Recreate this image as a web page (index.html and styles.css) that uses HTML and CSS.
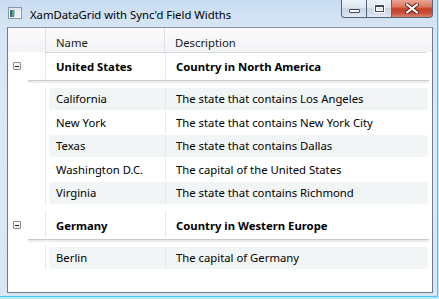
FILE: index.html
```html
<!DOCTYPE html>
<html>
<head>
<meta charset="utf-8">
<link rel="stylesheet" href="styles.css">
</head>
<body>
<div class="window">
  <div class="titlebar">
    <svg class="app-icon" width="14" height="12" viewBox="0 0 14 12">
      <rect x="0.5" y="0.5" width="13" height="11" fill="#f6f8fa" stroke="#8d97a3"/>
      <rect x="1" y="1" width="12" height="2" fill="#dde5ee"/>
      <rect x="2" y="3" width="2" height="7" fill="#2f6e9e"/>
      <rect x="4" y="3" width="2" height="7" fill="#5ea86b"/>
      <rect x="6" y="3" width="1" height="7" fill="#a9c8d8"/>
      <rect x="8" y="3" width="4" height="7" fill="#e8edf2"/>
    </svg>
    <span class="title">XamDataGrid with Sync'd Field Widths</span>
    <div class="caption">
      <div class="cbtn min"><span class="glyph-min"></span></div>
      <div class="cbtn max"><span class="glyph-max"></span></div>
      <div class="cbtn close">
        <svg width="16" height="11" viewBox="0 0 16 11">
          <path d="M3 1.5 L13 9.5 M13 1.5 L3 9.5" stroke="#5a2418" stroke-width="4" stroke-linecap="round" fill="none"/>
          <path d="M3 1.5 L13 9.5 M13 1.5 L3 9.5" stroke="#ffffff" stroke-width="2.2" stroke-linecap="round" fill="none"/>
        </svg>
      </div>
    </div>
  </div>
  <div class="client">
    <div class="hdr">
      <div class="sel"></div>
      <div class="hcell hname">Name</div>
      <div class="hcell hdesc">Description</div>
    </div>
    <div class="hdr-line"></div>

    <div class="group">
      <div class="grow">
        <div class="sel"><span class="expander"></span></div>
        <div class="gname">United States</div>
        <div class="gdesc">Country in North America</div>
      </div>
      <div class="gsep"><div class="gsep-line"></div></div>
      <div class="row alt"><div class="sel"></div><div class="rec"><div class="rname">California</div><div class="rdesc">The state that contains Los Angeles</div></div></div>
      <div class="row"><div class="sel"></div><div class="rec"><div class="rname">New York</div><div class="rdesc">The state that contains New York City</div></div></div>
      <div class="row alt"><div class="sel"></div><div class="rec"><div class="rname">Texas</div><div class="rdesc">The state that contains Dallas</div></div></div>
      <div class="row"><div class="sel"></div><div class="rec"><div class="rname">Washington D.C.</div><div class="rdesc">The capital of the United States</div></div></div>
      <div class="row alt"><div class="sel"></div><div class="rec"><div class="rname">Virginia</div><div class="rdesc">The state that contains Richmond</div></div></div>
    </div>

    <div class="group group-next">
      <div class="grow">
        <div class="sel"><span class="expander"></span></div>
        <div class="gname">Germany</div>
        <div class="gdesc">Country in Western Europe</div>
      </div>
      <div class="gsep"><div class="gsep-line"></div></div>
      <div class="row alt"><div class="sel"></div><div class="rec"><div class="rname">Berlin</div><div class="rdesc">The capital of Germany</div></div></div>
    </div>
  </div>
</div>
</body>
</html>
```
FILE: styles.css
```css
html, body {
  margin: 0;
  padding: 0;
}
body {
  width: 439px;
  height: 299px;
  overflow: hidden;
  background: #bdeafb;
  font-family: "Noto Sans", "Open Sans", sans-serif;
  font-size: 11.3px;
  color: #000;
}
.window {
  width: 438px;
  height: 297px;
  box-sizing: border-box;
  border-right: 1px solid #45c8f3;
  border-bottom: 1px solid #45c8f3;
  background: linear-gradient(180deg, #c9dcf1 0px, #d6e5f5 26px, #dbe8f6 120px, #d9e7f5 100%);
  display: flex;
  flex-direction: column;
}
.titlebar {
  height: 27px;
  flex: none;
  display: flex;
  align-items: flex-start;
  padding-right: 4px;
}
.app-icon {
  margin: 7px 0 0 8px;
  flex: none;
}
.title {
  margin-left: 8px;
  margin-top: 6px;
  line-height: 17px;
  color: #000;
  white-space: nowrap;
}
.caption {
  margin-left: auto;
  display: flex;
}
.cbtn {
  height: 18px;
  box-sizing: border-box;
  border-left: 1px solid #566478;
  border-bottom: 1px solid #566478;
  background: linear-gradient(180deg, #eef3f9 0%, #dde7f2 45%, #c8d5e4 50%, #d3dfec 80%, #e2ebf5 100%);
  display: flex;
  align-items: center;
  justify-content: center;
}
.min {
  width: 25px;
  border-bottom-left-radius: 4px;
}
.max {
  width: 25px;
}
.close {
  width: 42px;
  border-right: 1px solid #566478;
  border-bottom-right-radius: 4px;
  background: linear-gradient(180deg, #eba796 0%, #dc7660 40%, #c63f27 52%, #c94d37 75%, #dc8470 100%);
}
.glyph-min {
  width: 9px;
  height: 2px;
  margin-top: 5px;
  border: 1px solid #3e4b5c;
  border-radius: 1px;
  background: #fff;
}
.glyph-max {
  width: 7px;
  height: 4px;
  border: 1px solid #3e4b5c;
  border-top-width: 2px;
  box-shadow: inset 0 0 0 1px #fff, 0 0 0 1px #fff;
  background: #dfe7f0;
}

.client {
  flex: 1;
  margin: 0 4px 3px 7px;
  border: 1px solid #6e7b8d;
  border-top-color: #8794a5;
  background: #fff;
  display: flex;
  flex-direction: column;
}

.hdr {
  height: 24px;
  display: flex;
  background: linear-gradient(180deg, #fbfbfc 0%, #f2f3f5 100%);
}
.hdr .sel {
  width: 37px;
  border-right: 1px solid #dfe2e6;
}
.hcell {
  line-height: 24px;
  padding-top: 3px;
  box-sizing: border-box;
  height: 24px;
  padding-left: 10px;
  color: #1b1b1b;
}
.hname {
  width: 119px;
  border-right: 1px solid #dfe2e6;
}
.hdr-line {
  height: 1px;
  margin-left: 37px;
  width: 381px;
  background: #d2d5d9;
}

.group-next {
  margin-top: 7.5px;
}
.grow {
  height: 26px;
  display: flex;
  font-weight: bold;
}
.sel {
  width: 37px;
  flex: none;
  border-right: 1px solid #e6e7e8;
  display: flex;
  align-items: center;
}
.expander {
  width: 6px;
  height: 6px;
  margin-left: 5px;
  border: 1px solid #8d8d8d;
  border-radius: 1px;
  background: linear-gradient(180deg, #fff, #e9e9e9);
  position: relative;
}
.expander::after {
  content: "";
  position: absolute;
  left: 1px;
  top: 2.5px;
  width: 4px;
  height: 1px;
  background: #222;
}
.gname {
  width: 109px;
  padding-left: 10px;
  padding-top: 1px;
  line-height: 26px;
  border-right: 1px solid #e6e7e8;
}
.gdesc {
  padding-left: 10px;
  padding-top: 1px;
  line-height: 26px;
}
.gsep {
  height: 8px;
  box-sizing: border-box;
  padding-top: 1px;
}
.gsep-line {
  height: 3px;
  margin: 0 3px 0 20px;
  box-sizing: border-box;
  border-top: 1px solid #cbcbcb;
  background: #ececec;
}

.row {
  height: 23.5px;
  display: flex;
}
.rec {
  flex: 1;
  margin: 1px 4px 1px 3px;
  border-radius: 3px;
  display: flex;
}
.row.alt .rec {
  background: #f2f5f6;
}
.rname {
  width: 109px;
  padding-left: 7px;
  border-right: 1px solid #e5e8ea;
  line-height: 21.5px;
  white-space: nowrap;
}
.rdesc {
  padding-left: 10px;
  line-height: 21.5px;
  white-space: nowrap;
}
```
